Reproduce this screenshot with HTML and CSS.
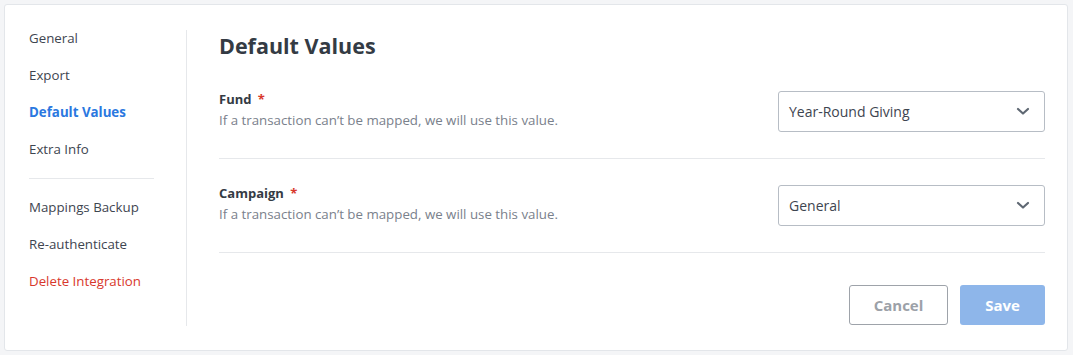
FILE: index.html
```html
<!DOCTYPE html>
<html>
<head>
<meta charset="utf-8">
<link rel="stylesheet" href="styles.css">
</head>
<body>
<div class="card">
  <nav class="sidebar">
    <a class="nav-item">General</a>
    <a class="nav-item">Export</a>
    <a class="nav-item active">Default Values</a>
    <a class="nav-item">Extra Info</a>
    <div class="nav-divider"></div>
    <a class="nav-item">Mappings Backup</a>
    <a class="nav-item">Re-authenticate</a>
    <a class="nav-item danger">Delete Integration</a>
  </nav>
  <main class="content">
    <h1 class="title">Default Values</h1>
    <div class="field">
      <div class="field-text">
        <div class="label">Fund <span class="req">*</span></div>
        <div class="desc">If a transaction can’t be mapped, we will use this value.</div>
      </div>
      <div class="select">
        <span>Year-Round Giving</span>
        <svg class="chev" width="14" height="9" viewBox="0 0 14 9"><path d="M2 2 L7 6.5 L12 2" fill="none" stroke="#5f6873" stroke-width="2.2" stroke-linecap="round" stroke-linejoin="round"/></svg>
      </div>
    </div>
    <div class="field">
      <div class="field-text">
        <div class="label">Campaign <span class="req">*</span></div>
        <div class="desc">If a transaction can’t be mapped, we will use this value.</div>
      </div>
      <div class="select">
        <span>General</span>
        <svg class="chev" width="14" height="9" viewBox="0 0 14 9"><path d="M2 2 L7 6.5 L12 2" fill="none" stroke="#5f6873" stroke-width="2.2" stroke-linecap="round" stroke-linejoin="round"/></svg>
      </div>
    </div>
    <div class="actions">
      <button class="btn btn-cancel">Cancel</button>
      <button class="btn btn-save">Save</button>
    </div>
  </main>
</div>
</body>
</html>
```
FILE: styles.css
```css
html, body {
  margin: 0;
  padding: 0;
  background: #f4f5f7;
}
body {
  padding: 4px 5px 4px 4px;
  font-family: "Open Sans", Lato, sans-serif;
  color: #343b44;
}
.card {
  background: #fff;
  border: 1px solid #e3e6ea;
  border-radius: 3px;
  height: 347px;
  box-sizing: border-box;
  display: flex;
  padding: 24px 22px 24px 24px;
}
.sidebar {
  width: 157px;
  border-right: 1px solid #e6e8eb;
  display: flex;
  flex-direction: column;
  margin-top: 1px;
}
.nav-item {
  font-size: 13.3px;
  height: 37px;
  line-height: 17px;
  color: #3e4550;
  display: block;
}
.nav-item.active {
  color: #2a78e0;
  font-weight: 700;
}
.nav-item.danger {
  color: #d8382c;
}
.nav-divider {
  width: 125px;
  height: 1px;
  background: #e6e8eb;
  margin: 0 0 20px 0;
}
.content {
  flex: 1;
  padding-left: 32px;
  display: flex;
  flex-direction: column;
}
.title {
  margin: 4px 0 0 0;
  font-size: 21.5px;
  font-weight: 700;
  color: #343b44;
  line-height: 26px;
  height: 32px;
}
.field {
  display: flex;
  justify-content: space-between;
  align-items: center;
  border-bottom: 1px solid #e6e8eb;
  height: 94px;
  box-sizing: border-box;
  padding-bottom: 1px;
}
.field-text {
  margin-top: -3px;
}
.label {
  font-size: 13px;
  font-weight: 700;
  color: #343b44;
  line-height: 18px;
}
.req {
  color: #d8382c;
  font-weight: 700;
  margin-left: 3px;
}
.desc {
  font-size: 13.3px;
  color: #7a818c;
  line-height: 18px;
  margin-top: 3px;
}
.select {
  width: 267px;
  height: 41px;
  box-sizing: border-box;
  border: 1px solid #b7bdc5;
  border-radius: 3px;
  display: flex;
  align-items: center;
  justify-content: space-between;
  padding: 0 14px 0 10px;
  font-size: 14px;
  color: #3e4550;
}
.actions {
  display: flex;
  justify-content: flex-end;
  gap: 12px;
  margin-top: 32px;
}
.btn {
  height: 40px;
  border-radius: 3px;
  font-family: "Open Sans", Lato, sans-serif;
  font-size: 15px;
  font-weight: 700;
  box-sizing: border-box;
}
.btn-cancel {
  width: 99px;
  background: #fff;
  border: 1px solid #9ea3aa;
  color: #9ca1a8;
}
.btn-save {
  width: 85px;
  background: #8eb6ea;
  border: none;
  color: #fff;
}
```
